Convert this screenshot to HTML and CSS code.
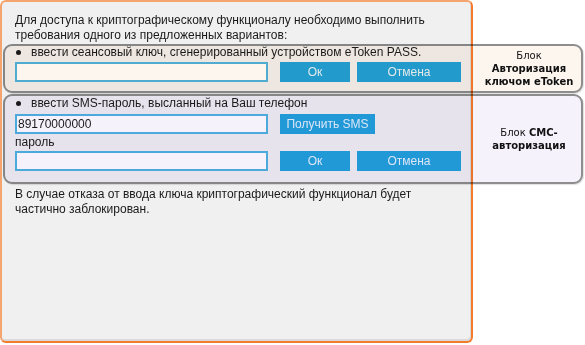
FILE: index.html
```html
<!DOCTYPE html>
<html lang="ru">
<head>
<meta charset="utf-8">
<title>Криптографический функционал</title>
<link rel="stylesheet" href="styles.css">
</head>
<body>
<div class="panel">
  <p class="intro">Для доступа к криптографическому функционалу необходимо выполнить требования одного из предложенных вариантов:</p>

  <div class="option option-token">
    <div class="bullet-row"><span class="dot"></span>ввести сеансовый ключ, сгенерированный устройством eToken PASS.</div>
    <div class="form-row">
      <input class="field" type="text" value="">
      <button class="btn btn-ok">Ок</button>
      <button class="btn btn-cancel">Отмена</button>
    </div>
  </div>

  <div class="option option-sms">
    <div class="bullet-row"><span class="dot"></span>ввести SMS-пароль, высланный на Ваш телефон</div>
    <div class="form-row row-phone">
      <input class="field" type="text" value="89170000000">
      <button class="btn btn-sms">Получить SMS</button>
    </div>
    <div class="field-label">пароль</div>
    <div class="form-row row-pass">
      <input class="field" type="text" value="">
      <button class="btn btn-ok">Ок</button>
      <button class="btn btn-cancel">Отмена</button>
    </div>
  </div>

  <p class="outro">В случае отказа от ввода ключа криптографический функционал будет частично заблокирован.</p>
</div>

<div class="callout callout-token">
  <div class="callout-label">Блок<br><b>Авторизация<br>ключом eToken</b></div>
</div>
<div class="callout callout-sms">
  <div class="callout-label">Блок <b>СМС-<br>авторизация</b></div>
</div>
</body>
</html>
```

FILE: styles.css
```css
html, body {
  margin: 0;
  padding: 0;
  background: #ffffff;
  width: 585px;
  height: 345px;
  overflow: hidden;
  position: relative;
}

body {
  font-family: "Liberation Sans", Arial, sans-serif;
  font-size: 12px;
  color: #1a1a1a;
}

.panel {
  box-sizing: border-box;
  margin: 0;
  width: 473px;
  height: 343px;
  border-style: solid;
  border-color: #f5a46e #f47a2c #f47a2c #f5a46e;
  border-width: 2px;
  border-radius: 6px;
  background: #f0f0f0;
  box-shadow: inset -1px -2px 0 #dadada;
  padding: 11px 0 0 13px;
}

.intro, .outro {
  margin: 0;
  line-height: 15px;
  width: 430px;
}

.option-token {
  margin-top: 2px;
}

.bullet-row {
  display: flex;
  align-items: center;
  line-height: 15px;
  white-space: nowrap;
}

.dot {
  width: 5px;
  height: 5px;
  border-radius: 50%;
  background: #1a1a1a;
  margin: 0 10px 0 1px;
  flex: none;
}

.form-row {
  display: flex;
  align-items: center;
  margin-top: 2px;
  height: 20px;
}

.option-sms {
  margin-top: 14px;
}

.row-phone {
  margin-top: 3px;
}

.field-label {
  line-height: 15px;
  margin-top: 1px;
}

.row-pass {
  margin-top: 1px;
}

.field {
  box-sizing: border-box;
  width: 253px;
  height: 20px;
  margin: 0;
  padding: 0 0 0 1px;
  border: 2px solid #4fb2de;
  background: #ffffff;
  font-family: "Liberation Sans", Arial, sans-serif;
  font-size: 12px;
  color: #1a1a1a;
  outline: none;
}

.btn {
  box-sizing: border-box;
  height: 20px;
  margin: 0;
  padding: 0;
  border: none;
  background: #22a1da;
  color: #e4f2fa;
  font-family: "Liberation Sans", Arial, sans-serif;
  font-size: 12px;
}

.btn-ok {
  width: 70px;
  margin-left: 12px;
}

.btn-cancel {
  width: 104px;
  margin-left: 7px;
}

.btn-sms {
  width: 95px;
  margin-left: 12px;
}

.outro {
  margin-top: 16px;
}

/* annotation callouts laid over the screenshot */
.callout {
  position: absolute;
  left: 3px;
  width: 580px;
  box-sizing: border-box;
  border: 2px solid #8e8e8e;
  border-radius: 9px;
  box-shadow: 1px 1px 1px rgba(0, 0, 0, 0.12);
  display: flex;
  align-items: center;
  justify-content: flex-end;
  mix-blend-mode: multiply;
}

.callout-token {
  top: 44px;
  height: 49px;
  background: #fdf6ef;
}

.callout-sms {
  top: 94px;
  height: 90px;
  background: #f5f2fc;
}

.callout-label {
  width: 104px;
  text-align: center;
  font-family: "DejaVu Sans", Verdana, sans-serif;
  font-size: 10px;
  line-height: 13px;
  color: #111111;
}

.callout-label b {
  font-weight: bold;
}
```
